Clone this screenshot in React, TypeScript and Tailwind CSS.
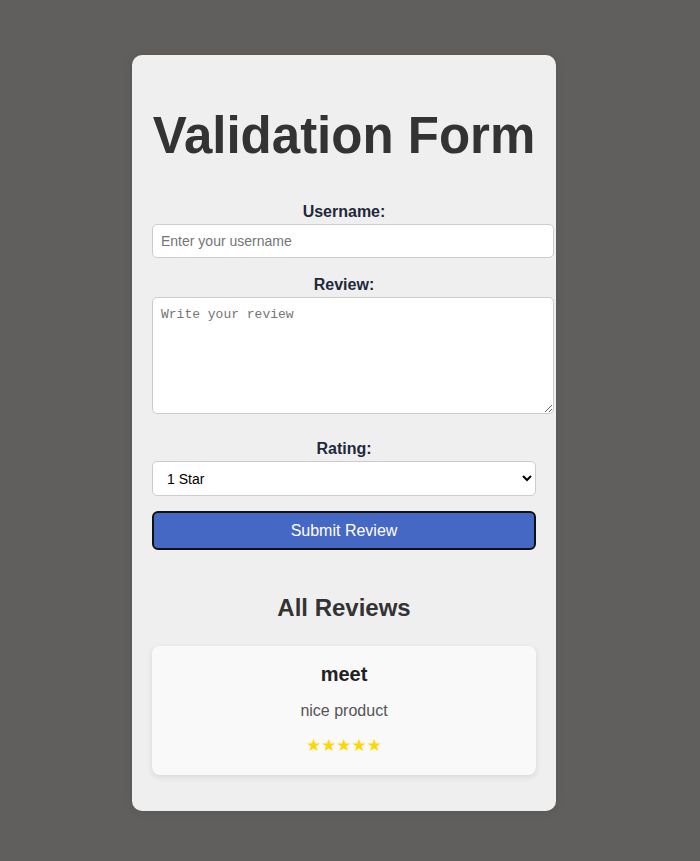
import { useState } from 'react';

type Review = { name: string; text: string; rating: number };

export default function App() {
    const [username, setUsername] = useState('');
    const [review, setReview] = useState('');
    const [rating, setRating] = useState('1');
    const [reviews, setReviews] = useState<Review[]>([{ name: 'meet', text: 'nice product', rating: 5 }]);

    const handleSubmit = (e: React.FormEvent) => {
        e.preventDefault();
        if (!username.trim() || !review.trim()) return;
        setReviews([...reviews, { name: username, text: review, rating: Number(rating) }]);
        setUsername('');
        setReview('');
    };

    return (
        <div className="min-h-[861px] bg-[#615f5d] pt-[55px] pb-[51px] font-['Liberation_Sans',Arial,sans-serif]">
            <div className="w-[688px]">
                <div className="mx-auto w-[424px] rounded-[10px] bg-[#efefef] px-5 pt-[51px] pb-[36px] shadow-[0_0_10px_rgba(0,0,0,0.1)]">
                    {/* Title */}
                    <h1 className="text-center text-[51px] font-bold leading-[60px] text-[#333] whitespace-nowrap">Validation Form</h1>

                    <form onSubmit={handleSubmit} className="mt-[37px] flex flex-col items-stretch">
                        <label htmlFor="username" className="block text-center text-base font-bold leading-[18px] text-[#1e293b]">
                            Username:
                        </label>
                        <input
                            id="username"
                            type="text"
                            value={username}
                            onChange={(e) => setUsername(e.target.value)}
                            placeholder="Enter your username"
                            className="mt-[3px] h-[34px] w-[402px] rounded-[5px] border border-[#ccc] bg-white px-2 text-sm text-black placeholder:text-[#757575] outline-none"
                        />

                        <label htmlFor="review" className="mt-[18px] block text-center text-base font-bold leading-[18px] text-[#1e293b]">
                            Review:
                        </label>
                        <textarea
                            id="review"
                            value={review}
                            onChange={(e) => setReview(e.target.value)}
                            placeholder="Write your review"
                            className="mt-[3px] h-[117px] w-[402px] rounded-[5px] border border-[#ccc] bg-white px-2 py-[9px] font-['Liberation_Mono',monospace] text-[13px] leading-[15px] text-black placeholder:text-[#757575] outline-none"
                        />

                        <label htmlFor="rating" className="mt-[26px] block text-center text-base font-bold leading-[18px] text-[#1e293b]">
                            Rating:
                        </label>
                        <select
                            id="rating"
                            value={rating}
                            onChange={(e) => setRating(e.target.value)}
                            className="mt-[3px] h-[35px] w-full rounded-[5px] border border-[#ccc] bg-white pl-[10px] pr-2 text-sm text-black outline-none"
                        >
                            <option value="1">1 Star</option>
                            <option value="2">2 Stars</option>
                            <option value="3">3 Stars</option>
                            <option value="4">4 Stars</option>
                            <option value="5">5 Stars</option>
                        </select>

                        <button
                            type="submit"
                            className="mt-[15px] h-[39px] w-full rounded-[6px] border-2 border-[#111] bg-[#4668c5] text-base text-white"
                        >
                            Submit Review
                        </button>
                    </form>

                    {/* Reviews */}
                    <h2 className="mt-[44px] text-center text-2xl font-bold leading-[28px] text-[#333]">All Reviews</h2>

                    <div className="mt-[24px] flex flex-col gap-4">
                        {reviews.map((r, i) => (
                            <div key={i} className="rounded-[8px] bg-[#f9f9f9] px-4 pt-[17px] pb-[21px] text-center shadow-[0_2px_6px_rgba(0,0,0,0.1)]">
                                <h3 className="text-xl font-bold leading-[23px] text-[#222]">{r.name}</h3>
                                <p className="mt-[16px] text-base leading-[18px] text-[#555]">{r.text}</p>
                                <div className="mt-[16px] text-[17px] leading-[18px] text-[#ffd700] font-['DejaVu_Sans',sans-serif]">
                                    {'★'.repeat(r.rating)}
                                </div>
                            </div>
                        ))}
                    </div>
                </div>
            </div>
        </div>
    );
}
